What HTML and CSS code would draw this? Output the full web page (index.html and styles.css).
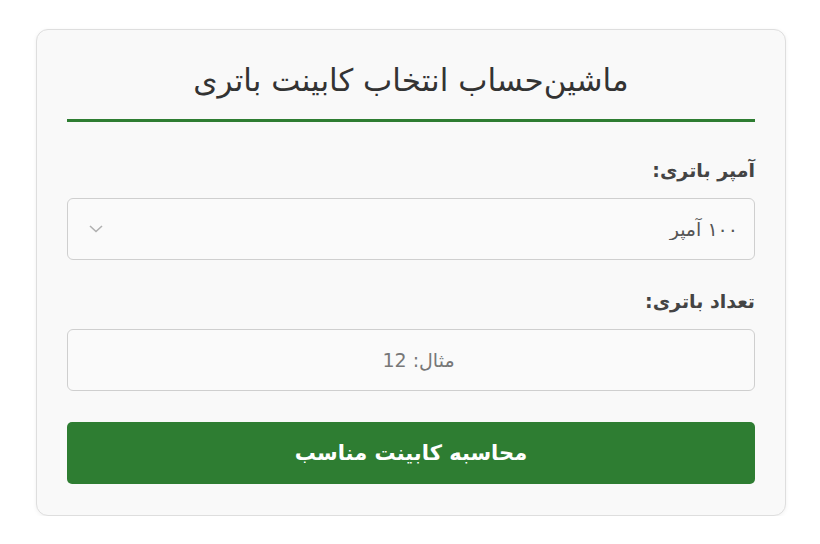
FILE: index.html
```html
<!DOCTYPE html>
<html lang="fa" dir="rtl">
<head>
    <meta charset="UTF-8">
    <meta name="viewport" content="width=device-width, initial-scale=1.0">
    <title>ماشین‌حساب انتخاب کابینت باتری</title>
    <link rel="stylesheet" href="styles.css">
</head>
<body>
    <div class="container">
        <div class="card">
            <h1>ماشین‌حساب انتخاب کابینت باتری</h1>

            <div class="field">
                <label for="amp">آمپر باتری:</label>
                <div class="select-wrap">
                    <select id="amp">
                        <option>۱۰۰ آمپر</option>
                        <option>۲۰۰ آمپر</option>
                    </select>
                    <svg class="chevron" width="14" height="8" viewBox="0 0 14 8">
                        <path d="M1 1 L7 6.5 L13 1" fill="none" stroke="#b0b0b0" stroke-width="1.6"/>
                    </svg>
                </div>
            </div>

            <div class="field">
                <label for="count">تعداد باتری:</label>
                <input type="number" id="count" placeholder="مثال: 12">
            </div>

            <button id="calc-button">محاسبه کابینت مناسب</button>
        </div>
    </div>
</body>
</html>
```

FILE: styles.css
```css
* {
    box-sizing: border-box;
    margin: 0;
    padding: 0;
    font-family: 'DejaVu Sans', sans-serif;
}

body {
    background-color: #ffffff;
    direction: rtl;
}

.container {
    width: 750px;
    margin: 29px 34px 0 auto;
}

.card {
    background-color: #f9f9f9;
    border: 1px solid #dedede;
    border-radius: 12px;
    box-shadow: 0 1px 4px rgba(0, 0, 0, 0.06);
    padding: 32px 30px 31px;
}

h1 {
    text-align: center;
    font-size: 31px;
    line-height: 36px;
    font-weight: normal;
    color: #333;
    padding-bottom: 21px;
    border-bottom: 3px solid #2e7d32;
    margin-bottom: 37px;
}

.field {
    margin-bottom: 30px;
}

.field:last-of-type {
    margin-bottom: 31px;
}

.field label {
    display: block;
    font-size: 19px;
    line-height: 22px;
    font-weight: bold;
    color: #444;
    margin-bottom: 17px;
}

.select-wrap {
    position: relative;
}

select,
input {
    width: 100%;
    height: 62px;
    border: 1px solid #cfcfcf;
    border-radius: 6px;
    background-color: #fafafa;
    font-size: 19px;
    color: #555;
    padding: 0 16px;
}

select {
    appearance: none;
    -webkit-appearance: none;
}

input {
    text-align: center;
}

input::placeholder {
    color: #777;
}

.chevron {
    position: absolute;
    left: 22px;
    top: 27px;
    pointer-events: none;
}

#calc-button {
    display: block;
    width: 100%;
    height: 62px;
    background-color: #2e7d32;
    color: #fff;
    border: none;
    border-radius: 5px;
    font-size: 21px;
    font-weight: bold;
    cursor: pointer;
}
```
